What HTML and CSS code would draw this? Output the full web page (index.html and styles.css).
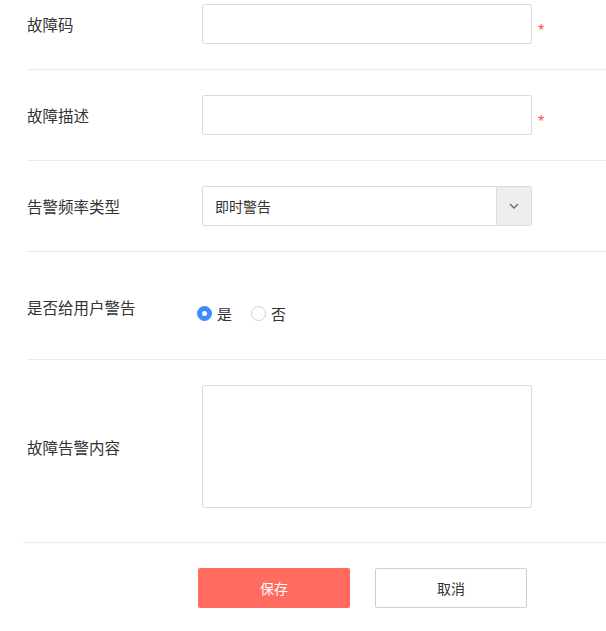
FILE: index.html
```html
<!DOCTYPE html>
<html lang="zh">
<head>
<meta charset="utf-8">
<title>故障码</title>
<link rel="stylesheet" href="styles.css">
</head>
<body>
<div class="form">
  <div class="row">
    <div class="label">故障码</div>
    <div class="field"><input class="input" type="text"></div>
    <span class="req">*</span>
  </div>
  <div class="row">
    <div class="label">故障描述</div>
    <div class="field"><input class="input" type="text"></div>
    <span class="req">*</span>
  </div>
  <div class="row">
    <div class="label">告警频率类型</div>
    <div class="field">
      <div class="select">
        <span class="select-text">即时警告</span>
        <span class="select-arrow">
          <svg width="10" height="6" viewBox="0 0 10 6"><path d="M1 1 L5 5 L9 1" fill="none" stroke="#666" stroke-width="1.3"/></svg>
        </span>
      </div>
    </div>
  </div>
  <div class="row row-radio">
    <div class="label">是否给用户警告</div>
    <div class="radios">
      <label class="radio"><span class="dot checked"></span>是</label>
      <label class="radio"><span class="dot"></span>否</label>
    </div>
  </div>
  <div class="row row-text">
    <div class="label">故障告警内容</div>
    <div class="field"><textarea class="textarea"></textarea></div>
  </div>
</div>
<div class="footer">
  <button class="btn btn-save">保存</button>
  <button class="btn btn-cancel">取消</button>
</div>
</body>
</html>
```

FILE: styles.css
```css
html, body {
  margin: 0;
  padding: 0;
  background: #fff;
}
body {
  font-family: "Microsoft YaHei", "Noto Sans CJK SC", "Liberation Sans", sans-serif;
  color: #333;
  font-size: 14px;
}
.form {
  margin-top: -21px;
  margin-left: 27px;
}
.row {
  display: flex;
  align-items: center;
  height: 90px;
  border-bottom: 1px solid #ebebeb;
}
.label {
  width: 175px;
  font-size: 15.5px;
  color: #333;
  flex: none;
}
.field {
  width: 330px;
  flex: none;
}
.input {
  display: block;
  box-sizing: border-box;
  width: 330px;
  height: 40px;
  border: 1px solid #dcdcdc;
  border-radius: 2px;
  outline: none;
  margin: 0;
  padding: 0 10px;
  font: inherit;
}
.req {
  color: #f5544f;
  font-family: "Liberation Sans", sans-serif;
  font-size: 16px;
  line-height: 1;
  margin-left: 6px;
  margin-top: 14px;
}
.select {
  box-sizing: border-box;
  width: 330px;
  height: 40px;
  border: 1px solid #dcdcdc;
  border-radius: 2px;
  display: flex;
  align-items: stretch;
}
.select-text {
  flex: 1;
  display: flex;
  align-items: center;
  padding-left: 12px;
  font-size: 14px;
  color: #333;
}
.select-arrow {
  width: 34px;
  background: #eeeeee;
  border-left: 1px solid #dcdcdc;
  display: flex;
  align-items: center;
  justify-content: center;
}
.row-radio {
  height: 107px;
  align-items: flex-start;
}
.row-radio .label {
  margin-top: 44px;
}
.radios {
  display: flex;
  gap: 19px;
  margin-top: 51px;
  margin-left: -5px;
}
.radio {
  display: flex;
  align-items: center;
  font-size: 15px;
  color: #333;
}
.dot {
  box-sizing: border-box;
  width: 15px;
  height: 15px;
  border-radius: 50%;
  border: 1px solid #d0d0d0;
  margin-right: 5px;
  background: #fff;
  position: relative;
}
.dot.checked {
  background: #3b8cff;
  border-color: #3b8cff;
}
.dot.checked::after {
  content: "";
  position: absolute;
  width: 5px;
  height: 5px;
  border-radius: 50%;
  background: #fff;
  left: 4px;
  top: 4px;
}
.row-text {
  height: auto;
  padding: 25px 0 34px;
  border-bottom: none;
}
.textarea {
  display: block;
  box-sizing: border-box;
  width: 330px;
  height: 123px;
  border: 1px solid #dcdcdc;
  border-radius: 2px;
  resize: none;
  outline: none;
  margin: 0;
}
.footer {
  margin-left: 23px;
  border-top: 1px solid #ebebeb;
  padding: 25px 0 0 175px;
  display: flex;
  gap: 25px;
}
.btn {
  box-sizing: border-box;
  width: 152px;
  height: 40px;
  border-radius: 2px;
  font-family: inherit;
  font-size: 14px;
  cursor: pointer;
  margin: 0;
}
.btn-save {
  background: #ff6b5e;
  border: none;
  color: #fff;
}
.btn-cancel {
  background: #fff;
  border: 1px solid #cfcfcf;
  color: #333;
}
```
